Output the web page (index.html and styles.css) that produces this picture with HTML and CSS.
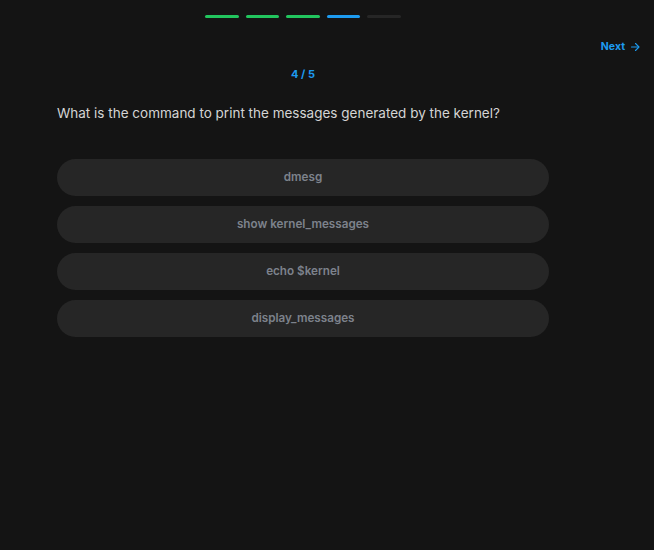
FILE: index.html
```
<!DOCTYPE html>
<html>
<head>
<meta charset="utf-8">
<link rel="stylesheet" href="styles.css">
</head>
<body>
<div class="page">
  <div class="column">
    <div class="progress">
      <span class="seg done"></span>
      <span class="seg done"></span>
      <span class="seg done"></span>
      <span class="seg current"></span>
      <span class="seg"></span>
    </div>
  </div>
  <div class="toolbar">
    <a class="next">Next
      <svg width="12" height="12" viewBox="0 0 24 24" fill="none" stroke="currentColor" stroke-width="2.2" stroke-linecap="round" stroke-linejoin="round"><path d="M5 12h14"/><path d="M13 5l7 7-7 7"/></svg>
    </a>
  </div>
  <div class="column">
    <div class="counter">4 / 5</div>
    <p class="question">What is the command to print the messages generated by the kernel?</p>
    <div class="options">
      <button class="option">dmesg</button>
      <button class="option">show kernel_messages</button>
      <button class="option">echo $kernel</button>
      <button class="option">display_messages</button>
    </div>
  </div>
</div>
</body>
</html>
```
FILE: styles.css
```
html, body {
  margin: 0;
  padding: 0;
  background: #141414;
  height: 100%;
}
body {
  font-family: Inter, "Noto Sans", sans-serif;
  color: #d4d4d4;
}
.page {
  padding-top: 15px;
}
.column {
  width: 492px;
  margin-left: 57px;
}
.progress {
  display: flex;
  justify-content: center;
  gap: 7px;
}
.seg {
  width: 33.6px;
  height: 3px;
  border-radius: 2px;
  background: #262626;
}
.seg.done { background: #22c55e; }
.seg.current { background: #1d9bf0; }
.toolbar {
  display: flex;
  justify-content: flex-end;
  padding-right: 13px;
  margin-top: 22px;
}
.next {
  display: flex;
  align-items: center;
  gap: 4px;
  color: #1d9bf0;
  font-size: 10.5px;
  font-weight: 700;
  line-height: 14px;
}
.counter {
  margin-top: 13px;
  text-align: center;
  color: #1d9bf0;
  font-size: 11px;
  font-weight: 700;
  line-height: 14px;
}
.question {
  margin: 22px 0 0;
  font-size: 13.5px;
  line-height: 20px;
  color: #d4d4d4;
}
.options {
  margin-top: 36px;
  display: flex;
  flex-direction: column;
  gap: 10px;
}
.option {
  height: 37px;
  border: none;
  border-radius: 19px;
  background: #262626;
  color: #7d828c;
  font-family: Inter, "Noto Sans", sans-serif;
  font-size: 11.7px;
  font-weight: 600;
  padding: 0 0 2px;
}
```
